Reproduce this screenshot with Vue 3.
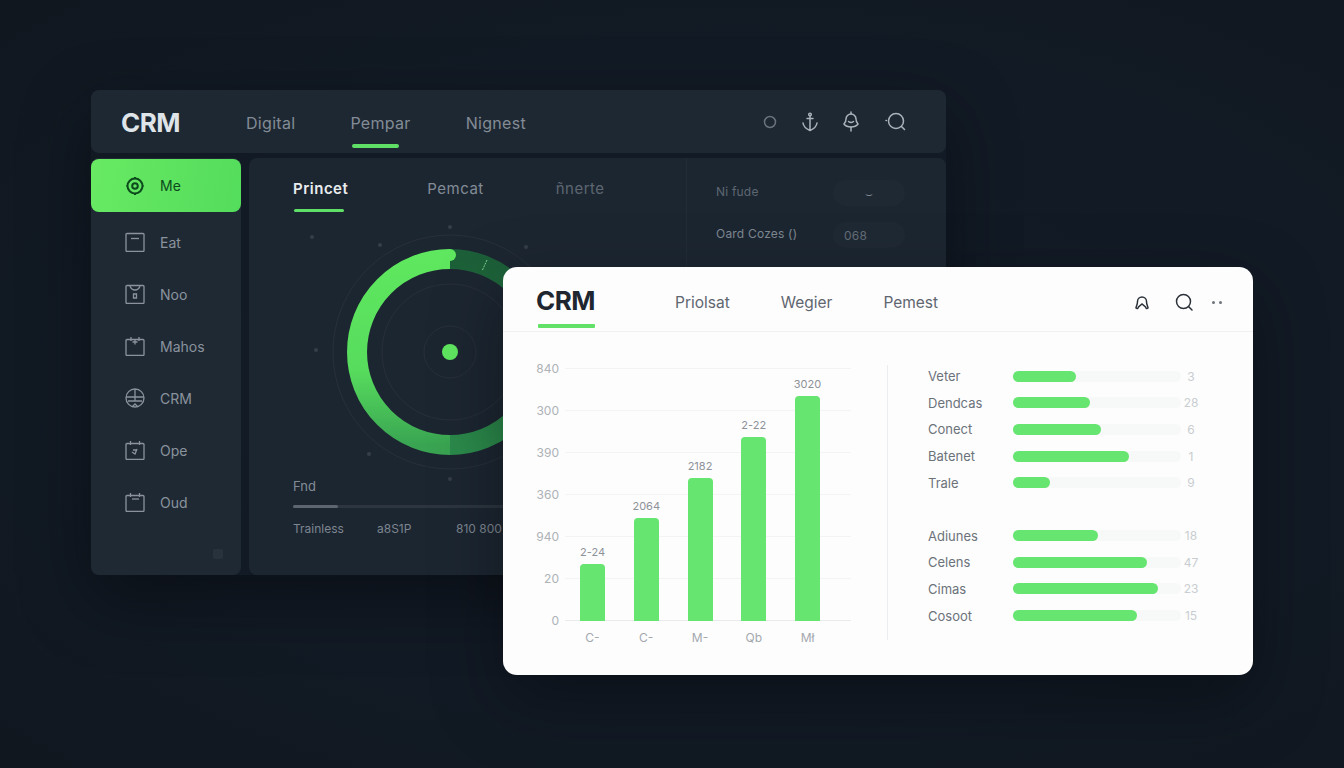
<template>
  <div class="stage">
    <section class="dark-window">
      <header class="topbar">
        <span class="dark-brand">CRM</span>
        <nav class="dark-nav">
          <div v-for="item in darkNav" :key="item" class="dark-nav-item">
            <span>{{ item }}</span>
            <i v-if="item === 'Pempar'"></i>
          </div>
        </nav>
        <div class="top-icons">
          <svg width="16" height="16" viewBox="0 0 16 16"><circle cx="8" cy="8" r="5.500" /></svg>
          <svg width="20" height="22" viewBox="0 0 20 22">
            <path d="M10 5v14M7 7.500h6M3 12c.5 3.500 3.500 6 7 7.500 3.500-1.500 6.500-4 7-7.500" />
            <circle cx="10" cy="3.500" r="1.300" />
          </svg>
          <svg class="bell" width="20" height="22" viewBox="0 0 20 22">
            <path d="M10 3a5 5 0 0 1 5 5c0 2 .5 3.500 2 5-1.500 2-4 3-7 3s-5.500-1-7-3c1.500-1.500 2-3 2-5a5 5 0 0 1 5-5z" />
            <path d="M10 16v4M7.500 10.500q2.500 2 5 0M10 1v2" />
          </svg>
          <svg class="find" width="24" height="24" viewBox="0 0 24 24">
            <circle cx="12" cy="11" r="7.500" />
            <path d="M17.500 16.500l3 3M2 10.500h.5" />
          </svg>
        </div>
      </header>

      <div class="dark-body">
        <aside class="sidebar">
          <div class="side-item active">
            <svg width="20" height="22" viewBox="0 0 20 22">
              <circle cx="10" cy="11" r="7.500" />
              <circle cx="10" cy="11" r="2.800" />
              <path d="M10 2v1.500M10 18.500V20M1.500 11H2.500M17.500 11h1" />
            </svg>
            <span>Me</span>
          </div>
          <div v-for="item in sideItems" :key="item.label" class="side-item">
            <svg width="20" height="20" viewBox="0 0 20 20">
              <path v-for="d in item.paths" :key="d" :d="d" />
            </svg>
            <span>{{ item.label }}</span>
          </div>
          <div class="side-foot"><b></b></div>
        </aside>

        <main class="panel">
          <div class="panel-left">
            <div class="tabs">
              <div class="tab current">Princet<i></i></div>
              <div class="tab">Pemcat</div>
              <div class="tab dim">ñnerte</div>
            </div>

            <svg class="donut" width="260" height="252" viewBox="0 0 260 252">
              <defs>
                <linearGradient id="brightArc" gradientUnits="userSpaceOnUse" x1="0" y1="33" x2="0" y2="219">
                  <stop offset="0" stop-color="#5fe75f" />
                  <stop offset="0.6" stop-color="#57dc5d" />
                  <stop offset="1" stop-color="#39a452" />
                </linearGradient>
                <linearGradient id="darkArc" gradientUnits="userSpaceOnUse" x1="0" y1="33" x2="0" y2="219">
                  <stop offset="0" stop-color="#1c5f38" />
                  <stop offset="1" stop-color="#2b8a4b" />
                </linearGradient>
              </defs>
              <g fill="none" stroke="#272f3a">
                <circle cx="130" cy="126" r="117" />
                <circle cx="130" cy="126" r="68" />
                <circle cx="130" cy="126" r="26" />
              </g>
              <path d="M130 33A93 93 0 0 1 130 219" fill="none" stroke="url(#darkArc)" stroke-width="20" />
              <path d="M130 33A93 93 0 0 0 130 219" fill="none" stroke="url(#brightArc)" stroke-width="20" />
              <circle cx="130" cy="29" r="6" fill="#5fe75f" />
              <path d="M167 34l-5 11" stroke="#7fd494" stroke-dasharray="2 1" fill="none" />
              <circle cx="130" cy="126" r="8" fill="#5fe660" />
              <circle v-for="d in dots" :key="d[0]" :cx="d[0]" :cy="d[1]" r="2" fill="#353e49" />
            </svg>

            <div class="panel-foot">
              <div class="foot-title">Fnd</div>
              <div class="foot-bar"><i></i></div>
              <div class="foot-row">
                <span>Trainless</span>
                <span>a8S1P</span>
                <span>810 800</span>
              </div>
            </div>
          </div>

          <div class="panel-right">
            <div class="field">
              <span class="field-label faint">Ni fude</span>
              <span class="pill">⌣</span>
            </div>
            <div class="field">
              <span class="field-label">Oard Cozes ()</span>
              <span class="pill value">068</span>
            </div>
          </div>
        </main>
      </div>
    </section>

    <section class="light-card">
      <header class="card-head">
        <div class="card-brand">
          <span>CRM</span>
          <i></i>
        </div>
        <nav class="card-nav">
          <span>Priolsat</span>
          <span>Wegier</span>
          <span>Pemest</span>
        </nav>
        <div class="card-icons">
          <svg width="18" height="18" viewBox="0 0 18 18">
            <path d="M3 15c0-2 1.500-3 1.500-6.500a4.500 4.500 0 0 1 9 0C13.500 12 15 13 15 15c-1 1-2 .5-2.500-1L9 11l-3.500 3C5 15.500 4 16 3 15z" />
          </svg>
          <svg width="20" height="20" viewBox="0 0 20 20">
            <circle cx="9.500" cy="9.500" r="7" />
            <path d="M14.500 14.500l3.500 3.500" />
          </svg>
          <span class="card-dots"><b></b><b></b></span>
        </div>
      </header>

      <div class="card-body">
        <div class="chart">
          <div class="chart-lines">
            <div v-for="t in ticks" :key="t" class="chart-line">
              <span>{{ t }}</span>
              <i></i>
            </div>
          </div>
          <div class="chart-bars">
            <div v-for="b in bars" :key="b.value" class="bar-col">
              <span class="bar-value">{{ b.value }}</span>
              <div class="bar" :style="{ height: b.height + 'px' }"></div>
              <span class="bar-cat">{{ b.cat }}</span>
            </div>
          </div>
        </div>

        <div class="lists">
          <div v-for="(group, i) in groups" :key="i" class="list-group">
            <div v-for="row in group" :key="row.label" class="list-row">
              <span class="row-label">{{ row.label }}</span>
              <div class="track">
                <div class="fill" :style="{ width: row.width + 'px' }"></div>
              </div>
              <span class="row-value">{{ row.value }}</span>
            </div>
          </div>
        </div>
      </div>
    </section>
  </div>
</template>

<script setup>
const darkNav = ['Digital', 'Pempar', 'Nignest']

const sideItems = [
  { label: 'Eat', paths: ['M2 1.500h16a1 1 0 0 1 1 1v16a1 1 0 0 1-1 1H2a1 1 0 0 1-1-1v-16a1 1 0 0 1 1-1z', 'M6 6.500h8'] },
  { label: 'Noo', paths: ['M2 1.500h16a1 1 0 0 1 1 1v16a1 1 0 0 1-1 1H2a1 1 0 0 1-1-1v-16a1 1 0 0 1 1-1z', 'M5 2c1 3 3 4 5 4s4-1 5-4', 'M8.500 10h3v4h-3z'] },
  { label: 'Mahos', paths: ['M2 3.500h16a1 1 0 0 1 1 1v14a1 1 0 0 1-1 1H2a1 1 0 0 1-1-1v-14a1 1 0 0 1 1-1z', 'M6 1v4M14 1v4', 'M10 3.500v5M7.500 6h5'] },
  { label: 'CRM', paths: ['M10 1a9 9 0 1 1 0 18 9 9 0 0 1 0-18z', 'M1 9h18M3 13h14', 'M10 1v12M7 19l3-3 3 3'] },
  { label: 'Ope', paths: ['M2 3.500h16a1 1 0 0 1 1 1v14a1 1 0 0 1-1 1H2a1 1 0 0 1-1-1v-14a1 1 0 0 1 1-1z', 'M5.500 1v4M14.500 1v4', 'M7 12l3 2 2-5M8 10h4'] },
  { label: 'Oud', paths: ['M2 3.500h16a1 1 0 0 1 1 1v14a1 1 0 0 1-1 1H2a1 1 0 0 1-1-1v-14a1 1 0 0 1 1-1z', 'M5.500 1v4M14.500 1v4', 'M7 7h7'] },
]

const dots = [[130, 1], [60, 19], [-8, 11], [206, 21], [-4, 124], [49, 228], [130, 253]]

const ticks = ['840', '300', '390', '360', '940', '20', '0']

const bars = [
  { cat: 'C-', value: '2-24', height: 57 },
  { cat: 'C-', value: '2064', height: 103 },
  { cat: 'M-', value: '2182', height: 143 },
  { cat: 'Qb', value: '2-22', height: 184 },
  { cat: 'Mł', value: '3020', height: 225 },
]

const groups = [
  [
    { label: 'Veter', width: 63, value: '3' },
    { label: 'Dendcas', width: 77, value: '28' },
    { label: 'Conect', width: 88, value: '6' },
    { label: 'Batenet', width: 116, value: '1' },
    { label: 'Trale', width: 37, value: '9' },
  ],
  [
    { label: 'Adiunes', width: 85, value: '18' },
    { label: 'Celens', width: 134, value: '47' },
    { label: 'Cimas', width: 145, value: '23' },
    { label: 'Cosoot', width: 124, value: '15' },
  ],
]
</script>

<style>
html,
body {
  margin: 0;
  background: #111823;
}
</style>

<style scoped>
.stage {
  position: relative;
  width: 1344px;
  height: 768px;
  overflow: hidden;
  font-family: Inter, "Liberation Sans", sans-serif;
  background: radial-gradient(ellipse at 55% 50%, #131b27 0%, #121a25 60%, #10171f 100%);
}

.dark-window {
  position: absolute;
  left: 91px;
  top: 90px;
  width: 855px;
  height: 485px;
  display: flex;
  flex-direction: column;
  gap: 5px;
  box-shadow: 0 24px 70px rgba(0, 0, 0, 0.4);
  border-radius: 8px;
}

.topbar {
  height: 63px;
  flex: none;
  display: flex;
  align-items: flex-start;
  background: #1e2833;
  border-radius: 8px;
  padding-left: 30px;
  padding-right: 38px;
}

.dark-brand {
  font-size: 26px;
  font-weight: 700;
  line-height: 30px;
  margin-top: 18px;
  letter-spacing: -0.5px;
  color: #dfe4e8;
  width: 125px;
}

.dark-nav {
  display: flex;
  gap: 55px;
}

.dark-nav-item {
  display: flex;
  flex-direction: column;
  padding-top: 23px;
  font-size: 16px;
  line-height: 20px;
  letter-spacing: 0.3px;
  color: #838c96;
}

.dark-nav-item i {
  display: block;
  width: 47px;
  height: 4px;
  margin: 11px 0 0 2px;
  border-radius: 2px;
  background: #5fdf66;
}

.top-icons {
  margin-left: auto;
  height: 63px;
  display: flex;
  align-items: center;
  gap: 22px;
}

.top-icons svg {
  fill: none;
  stroke: #aab2ba;
  stroke-width: 1.500;
  stroke-linecap: round;
}

.top-icons svg:first-child {
  stroke: #6a737d;
}

.top-icons .bell {
  margin-left: -1px;
}

.top-icons .find {
  margin-left: 1px;
}

.dark-body {
  flex: 1;
  display: flex;
  gap: 8px;
  min-height: 0;
}

.sidebar {
  width: 150px;
  flex: none;
  background: #1f2934;
  border-radius: 8px;
  display: flex;
  flex-direction: column;
  padding-top: 1px;
  box-sizing: border-box;
}

.side-item {
  height: 52px;
  flex: none;
  display: flex;
  align-items: center;
  padding-left: 34px;
  gap: 15px;
  font-size: 14px;
  color: #8a939d;
}

.side-item svg {
  fill: none;
  stroke: #8a939d;
  stroke-width: 1.300;
  flex: none;
}

.side-item.active {
  height: 53px;
  margin-bottom: 4px;
  border-radius: 8px;
  background: linear-gradient(100deg, #68ea63 0%, #54dc5c 100%);
  color: #0c4a1d;
}

.side-item.active svg {
  stroke: #0c4a1d;
  stroke-width: 2;
}

.side-foot {
  margin-top: auto;
  padding: 0 18px 16px 0;
  display: flex;
  justify-content: flex-end;
}

.side-foot b {
  width: 10px;
  height: 10px;
  border-radius: 2px;
  background: #28323d;
}

.panel {
  flex: 1;
  display: flex;
  background: #1c2631;
  border-radius: 8px;
  min-width: 0;
}

.panel-left {
  width: 437px;
  flex: none;
  box-sizing: border-box;
  padding-left: 44px;
}

.tabs {
  display: flex;
  gap: 79px;
  height: 54px;
}

.tab {
  padding-top: 21px;
  font-size: 15px;
  line-height: 19px;
  letter-spacing: 0.5px;
  color: #838c96;
}

.tab.current {
  font-weight: 600;
  color: #e8ecef;
}

.tab.current i {
  display: block;
  width: 50px;
  height: 3px;
  margin: 11px 0 0 1px;
  border-radius: 2px;
  background: #5fdf66;
}

.tab.dim {
  color: #5d6671;
  margin-left: -7px;
}

.donut {
  display: block;
  margin: 14px 0 0 27px;
  overflow: visible;
}

.panel-foot {
  width: 300px;
}

.foot-title {
  font-size: 13px;
  line-height: 16px;
  color: #838c96;
}

.foot-bar {
  height: 3px;
  margin-top: 11px;
  border-radius: 2px;
  background: #2c3540;
}

.foot-bar i {
  display: block;
  width: 45px;
  height: 3px;
  border-radius: 2px;
  background: #5c6570;
}

.foot-row {
  display: flex;
  margin-top: 13px;
  font-size: 12px;
  line-height: 16px;
  color: #7c8590;
}

.foot-row span:first-child {
  width: 84px;
}

.foot-row span:nth-child(2) {
  width: 79px;
}

.panel-right {
  flex: 1;
  padding: 22px 41px 0 29px;
  border-left: 1px solid #222c37;
  align-self: stretch;
}

.field {
  display: flex;
  align-items: center;
  justify-content: space-between;
  height: 26px;
  margin-bottom: 16px;
  font-size: 12px;
  letter-spacing: 0.2px;
  color: #7f8892;
}

.field-label {
  margin-top: -3px;
}

.field-label.faint {
  color: #5d6671;
}

.pill {
  width: 72px;
  height: 26px;
  box-sizing: border-box;
  border-radius: 13px;
  background: #1f2934;
  display: flex;
  align-items: center;
  justify-content: center;
  color: #7f8892;
}

.pill.value {
  justify-content: flex-start;
  padding-left: 11px;
  color: #646d78;
}

.light-card {
  position: absolute;
  left: 503px;
  top: 267px;
  width: 750px;
  height: 408px;
  background: #fdfdfd;
  border-radius: 14px;
  box-shadow: 0 24px 70px rgba(0, 0, 0, 0.35);
  display: flex;
  flex-direction: column;
}

.card-head {
  height: 65px;
  flex: none;
  box-sizing: border-box;
  display: flex;
  align-items: flex-start;
  padding: 0 31px 0 33px;
  border-bottom: 1px solid #f0f1f2;
}

.card-brand {
  display: flex;
  flex-direction: column;
  padding-top: 19px;
  width: 139px;
  font-size: 26px;
  line-height: 30px;
  font-weight: 700;
  letter-spacing: -0.5px;
  color: #20262f;
}

.card-brand i {
  display: block;
  width: 57px;
  height: 4px;
  margin: 8px 0 0 2px;
  border-radius: 1px;
  background: #62e169;
}

.card-nav {
  display: flex;
  gap: 51px;
  height: 70px;
  align-items: center;
  font-size: 15.500px;
  color: #5f6670;
}

.card-icons {
  margin-left: auto;
  height: 70px;
  display: flex;
  align-items: center;
  gap: 23px;
}

.card-icons svg {
  fill: none;
  stroke: #2c323a;
  stroke-width: 1.500;
  stroke-linecap: round;
}

.card-dots {
  display: flex;
  gap: 4px;
  margin-left: -5px;
}

.card-dots b {
  width: 3px;
  height: 3px;
  border-radius: 50%;
  background: #6e747c;
}

.card-body {
  flex: 1;
  display: flex;
  min-height: 0;
}

.chart {
  width: 384px;
  flex: none;
  box-sizing: border-box;
  padding: 15px 0 0 33px;
  display: grid;
  grid-template-columns: 315px;
  grid-template-rows: 295px;
}

.chart-lines,
.chart-bars {
  grid-area: 1 / 1;
}

.chart-line {
  height: 42px;
  display: flex;
  align-items: center;
  gap: 6px;
}

.chart-line span {
  width: 23px;
  text-align: right;
  font-size: 12px;
  color: #adb2b7;
}

.chart-line i {
  flex: 1;
  height: 1px;
  background: #f3f4f5;
}

.chart-line:last-child i {
  background: #e9eaec;
}

.chart-bars {
  display: flex;
  gap: 28.750px;
  padding-left: 44px;
  height: 295px;
  align-items: flex-end;
  box-sizing: border-box;
  padding-bottom: 12px;
}

.bar-col {
  width: 25px;
  flex: none;
  display: flex;
  flex-direction: column;
  align-items: center;
}

.bar-value {
  font-size: 11px;
  line-height: 14px;
  margin-bottom: 5px;
  color: #8d9299;
  white-space: nowrap;
}

.bar {
  width: 25px;
  border-radius: 4px 4px 0 0;
  background: #66e570;
}

.bar-cat {
  height: 0;
  padding-top: 9px;
  font-size: 12px;
  line-height: 15px;
  color: #a3a8ae;
  white-space: nowrap;
}

.lists {
  flex: 1;
  margin: 33px 0 35px;
  border-left: 1px solid #ebedef;
  padding-left: 40px;
}

.list-group {
  margin-top: -2px;
  margin-bottom: 28.500px;
}

.list-row {
  height: 26.600px;
  display: flex;
  align-items: center;
  font-size: 13px;
}

.row-label {
  width: 85px;
  flex: none;
  color: #6b727a;
}

.track {
  width: 168px;
  height: 11px;
  flex: none;
  border-radius: 6px;
  background: #f7f8f8;
}

.fill {
  height: 11px;
  border-radius: 6px;
  background: #66e570;
}

.row-value {
  width: 20px;
  text-align: center;
  font-size: 12px;
  color: #c9cdd1;
}
</style>
